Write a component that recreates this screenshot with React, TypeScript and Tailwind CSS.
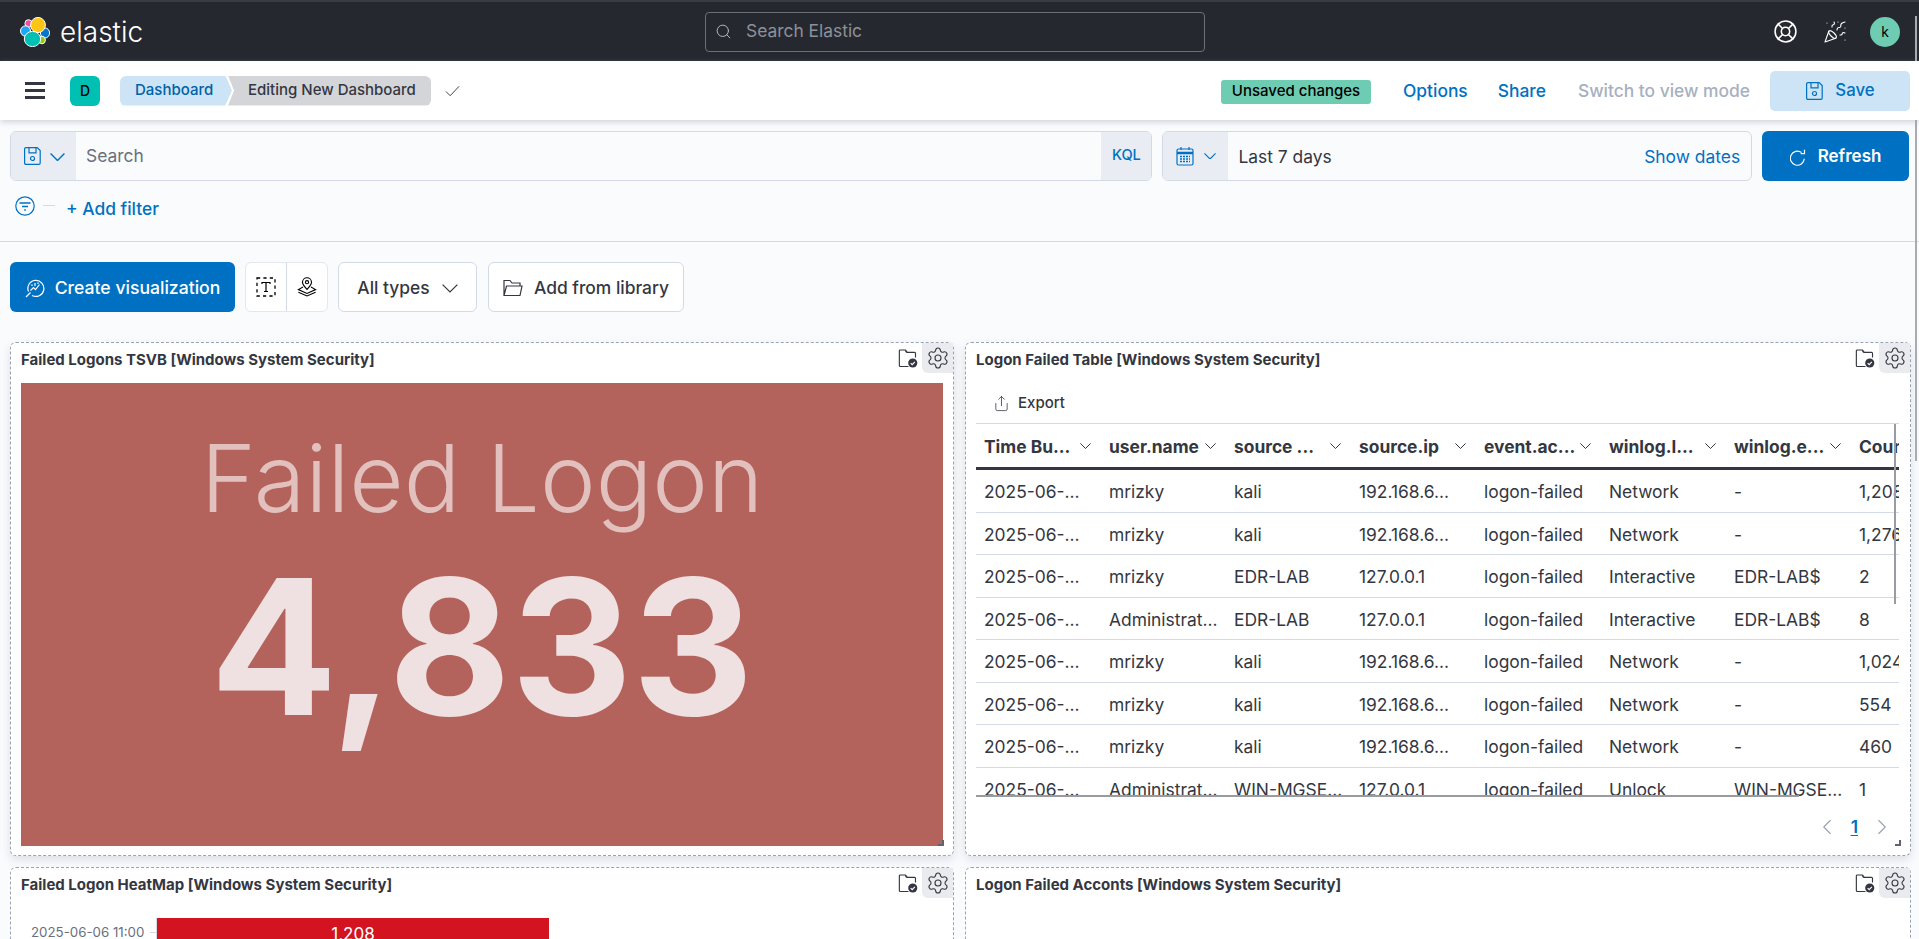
import React from "react";
import { ChevronLeft, ChevronRight, Search, LifeBuoy, PartyPopper, Settings, Share } from "lucide-react";

const Chevron = ({ w, color = "currentColor", sw = 1.2, className = "" }: { w: number; color?: string; sw?: number; className?: string }) => (
  <svg viewBox="0 0 16 9" width={w} height={(w * 9) / 16} fill="none" stroke={color} strokeWidth={(sw * 16) / w} className={className}>
    <path d="M0.6 0.6L8 8L15.4 0.6" />
  </svg>
);

const SaveIcon = ({ className = "" }: { className?: string }) => (
  <svg viewBox="0 0 20 20" width="20" height="20" fill="none" stroke="currentColor" strokeWidth="1.2" className={className}>
    <path d="M3 1.6h11.2l3 3V17a1.4 1.4 0 0 1-1.4 1.4H3A1.4 1.4 0 0 1 1.6 17V3A1.4 1.4 0 0 1 3 1.6z" />
    <path d="M6 1.8v5h7v-5" />
    <circle cx="9.5" cy="12.5" r="2" />
  </svg>
);

const FolderCheck = () => (
  <svg viewBox="0 0 21 20" width="20" height="19" fill="none" className="shrink-0">
    <path d="M11 18.4H2.4a1 1 0 0 1-1-1V2a1 1 0 0 1 1-1h5.4l2 2.6h7.6a1 1 0 0 1 1 1V9" stroke="#343741" strokeWidth="1.2" />
    <path d="M7.6 1.4l1.6 2.4" stroke="#343741" strokeWidth="1.2" />
    <circle cx="15.5" cy="14.8" r="4.8" fill="#343741" />
    <path d="M13.3 14.9l1.6 1.6 2.8-3" stroke="#fff" strokeWidth="1.2" />
  </svg>
);

const Logo = () => (
  <svg viewBox="0 0 30 30" width="30" height="30" className="shrink-0">
    <ellipse cx="8.5" cy="6.5" rx="3.6" ry="3.8" fill="#f04e98" stroke="#fff" strokeWidth="1" />
    <ellipse cx="5.5" cy="14" rx="5" ry="5.2" fill="#1ba9f5" stroke="#fff" strokeWidth="1" />
    <ellipse cx="25" cy="16" rx="4.6" ry="5" fill="#0077cc" stroke="#fff" strokeWidth="1" />
    <ellipse cx="22" cy="23" rx="3.4" ry="3.8" fill="#93c90e" stroke="#fff" strokeWidth="1" />
    <ellipse cx="18" cy="8" rx="7.4" ry="7.6" fill="#fec514" stroke="#fff" strokeWidth="1" />
    <ellipse cx="12.5" cy="22" rx="8.2" ry="7.6" fill="#00bfb3" stroke="#fff" strokeWidth="1" />
  </svg>
);

const CalendarIcon = () => (
  <svg viewBox="0 0 18 20" width="18" height="20" fill="none" stroke="#0071c2" strokeWidth="1.2">
    <rect x="1" y="3" width="16" height="16" rx="1.5" />
    <path d="M1 7h16" strokeWidth="2.4" />
    <path d="M5 1v3M13 1v3" />
    <path d="M4 10.5h10M4 13h10M4 15.5h10" strokeWidth="1.3" strokeDasharray="2 1" />
  </svg>
);

const RefreshIcon = () => (
  <svg viewBox="0 0 16 17" width="16" height="17" fill="none" stroke="#fff" strokeWidth="1.2">
    <path d="M11.5 3.6A7 7 0 1 0 14.3 9.8" />
    <path d="M14.5 0.8V4.6H10.7" />
  </svg>
);

const FilterCircle = () => (
  <svg viewBox="0 0 20 20" width="20" height="20" fill="none" stroke="#0071c2" strokeWidth="1.2">
    <circle cx="10" cy="10" r="9.2" />
    <path d="M4.5 7h11M7 10.5h6M9.2 14h1.6" strokeWidth="1.4" />
  </svg>
);

const VizIcon = () => (
  <svg viewBox="0 0 20 20" width="20" height="20" fill="none" stroke="#fff" strokeWidth="1.2">
    <path d="M3.5 13.5A8 8 0 1 1 7 17.4" />
    <path d="M1 19l4.5-4.5" />
    <path d="M5.5 12.5l3-3 2 2 4-5" />
    <path d="M7 8V6.5M10 8V5M13 6V4.5" />
  </svg>
);

const TextIcon = () => (
  <svg viewBox="0 0 20 20" width="20" height="20" fill="none" stroke="#000" strokeWidth="1.2">
    <path d="M1 1h18v18H1z" strokeDasharray="3.2 3.2" strokeWidth="1.3" />
    <path d="M6 7V5.5h8V7M10 5.5v9M8 14.5h4" />
  </svg>
);

const MapIcon = () => (
  <svg viewBox="0 0 20 20" width="20" height="20" fill="none" stroke="#000" strokeWidth="1.1">
    <path d="M10 12.5C7.5 9.5 5.5 7.6 5.5 5.2a4.5 4.5 0 0 1 9 0c0 2.4-2 4.3-4.5 7.3z" />
    <circle cx="10" cy="5.2" r="1.6" />
    <path d="M6 10l-4.6 2.6L10 16.5l8.6-3.9L14 10" />
    <path d="M1.4 15.2L10 19l8.6-3.8" />
  </svg>
);

const PanelHeader = ({ title }: { title: string }) => (
  <div className="flex h-[30px] shrink-0 items-start">
    <div className="flex-1 truncate pl-[10px] pt-[7px] text-[15px] font-bold leading-[20px] text-[#343741]">{title}</div>
    <div className="flex items-center pt-[6px]">
      <FolderCheck />
    </div>
    <div className="ml-[4px] flex h-[30px] w-[31px] items-center justify-center rounded-bl-[6px] bg-[#e9ebee]">
      <Settings size={24} strokeWidth={1.1} color="#343741" />
    </div>
  </div>
);

const columns = ["Time Bu...", "user.name", "source ...", "source.ip", "event.ac...", "winlog.l...", "winlog.e...", "Count"];
const rows = [
  ["2025-06-...", "mrizky", "kali", "192.168.6...", "logon-failed", "Network", "-", "1,208"],
  ["2025-06-...", "mrizky", "kali", "192.168.6...", "logon-failed", "Network", "-", "1,276"],
  ["2025-06-...", "mrizky", "EDR-LAB", "127.0.0.1", "logon-failed", "Interactive", "EDR-LAB$", "2"],
  ["2025-06-...", "Administrat...", "EDR-LAB", "127.0.0.1", "logon-failed", "Interactive", "EDR-LAB$", "8"],
  ["2025-06-...", "mrizky", "kali", "192.168.6...", "logon-failed", "Network", "-", "1,024"],
  ["2025-06-...", "mrizky", "kali", "192.168.6...", "logon-failed", "Network", "-", "554"],
  ["2025-06-...", "mrizky", "kali", "192.168.6...", "logon-failed", "Network", "-", "460"],
  ["2025-06-...", "Administrat...", "WIN-MGSE...", "127.0.0.1", "logon-failed", "Unlock", "WIN-MGSE...", "1"],
];

export default function App() {
  return (
    <div
      className="relative h-[939px] w-[1919px] overflow-hidden bg-[#fafbfd] text-[17.4px] text-[#343741]"
      style={{ fontFamily: "Inter, 'Noto Sans', sans-serif" }}
    >
      {/* top bar */}
      <div className="flex h-[61px] items-center border-t-2 border-[#3a3c42] bg-[#25282f] pl-[20px] pr-[19px]">
        <div className="flex w-[685px] items-center">
          <Logo />
          <span className="ml-[10px] text-[28px] font-light leading-none text-white">elastic</span>
        </div>
        <div className="flex h-[40px] w-[500px] items-center rounded-[4px] border border-[#6c6f75] pl-[9px]">
          <Search size={17} strokeWidth={1.3} color="#bfc2c8" />
          <span className="ml-[14px] text-[#8e9197]">Search Elastic</span>
        </div>
        <div className="ml-auto flex items-center">
          <LifeBuoy size={25} strokeWidth={1.5} color="#fff" />
          <PartyPopper size={24} strokeWidth={1.1} color="#fff" className="ml-[25px]" />
          <div className="ml-[23px] flex h-[30px] w-[30px] items-center justify-center rounded-full bg-[#6dccb1] text-[14px] text-black">k</div>
        </div>
      </div>

      {/* app header */}
      <div className="relative z-10 flex h-[59px] items-center bg-white pl-[25px] pr-[9px] shadow-[0_2px_6px_rgba(152,162,179,0.45)]">
        <div className="flex w-[20px] flex-col gap-[4px]">
          <div className="h-[3px] bg-[#343741]" />
          <div className="h-[3px] bg-[#343741]" />
          <div className="h-[3px] bg-[#343741]" />
        </div>
        <div className="ml-[25px] flex h-[30px] w-[30px] items-center justify-center rounded-[6px] bg-[#00bfb3] text-[14px] font-medium text-black">D</div>
        <div
          className="ml-[20px] flex h-[30px] w-[112px] items-center rounded-l-[6px] bg-[#cce4f5] pl-[15px] text-[15px] font-medium text-[#0061a6]"
          style={{ clipPath: "polygon(0 0, 94% 0, 100% 50%, 94% 100%, 0 100%)" }}
        >
          Dashboard
        </div>
        <div
          className="-ml-[4px] flex h-[30px] w-[203px] items-center rounded-r-[6px] bg-[#d3d5d9] pl-[20px] text-[15px] font-medium text-[#343741]"
          style={{ clipPath: "polygon(0 0, 100% 0, 100% 100%, 0 100%, 3% 50%)" }}
        >
          Editing New Dashboard
        </div>
        <svg viewBox="0 0 16 12" width="15" height="12" fill="none" stroke="#343741" strokeWidth="1" className="ml-[14px]">
          <path d="M1 6.5L5.5 11L15 1" />
        </svg>
        <div className="ml-auto flex items-center">
          <span className="mt-[2px] flex h-[24px] w-[150px] items-center justify-center rounded-[3px] bg-[#6dccb1] text-[15px] font-medium text-black">Unsaved changes</span>
          <span className="ml-[32px] pt-[1px] font-medium text-[#0071c2]">Options</span>
          <span className="ml-[30px] pt-[1px] font-medium text-[#0071c2]">Share</span>
          <span className="ml-[32px] pt-[1px] font-medium text-[#a7b0c0]">Switch to view mode</span>
          <div className="ml-[20px] flex h-[40px] w-[140px] items-center justify-center gap-[10px] rounded-[5px] bg-[#cce4f5] pt-[1px] text-[16.8px] font-medium text-[#0071c2]">
            <SaveIcon />
            Save
          </div>
        </div>
      </div>

      {/* query bar */}
      <div className="h-[122px] border-b border-[#d3dae6] px-[10px] pt-[11px]">
        <div className="flex gap-[10px]">
          <div className="flex h-[50px] w-[1143px] overflow-hidden rounded-[6px] border border-[#d3dae6]">
            <div className="flex w-[65px] items-center justify-center gap-[7px] bg-[#e9edf3] text-[#0071c2]">
              <SaveIcon />
              <Chevron w={15} sw={1.4} className="mt-[2px]" />
            </div>
            <div className="flex flex-1 items-center pl-[10px] pt-[1px] text-[#69707d]">Search</div>
            <div className="flex w-[50px] items-center justify-center bg-[#e9edf3] text-[14.6px] font-medium text-[#0071c2]">KQL</div>
          </div>
          <div className="flex h-[50px] w-[590px] overflow-hidden rounded-[6px] border border-[#d3dae6]">
            <div className="flex w-[65px] items-center justify-center gap-[10px] bg-[#e9edf3] text-[#0071c2]">
              <CalendarIcon />
              <Chevron w={12} sw={1.1} />
            </div>
            <div className="flex flex-1 items-center justify-between pl-[10px] pr-[11px] pt-[2px]">
              <span>Last 7 days</span>
              <span className="text-[#0071c2]">Show dates</span>
            </div>
          </div>
          <div className="flex h-[50px] w-[147px] items-center justify-center gap-[12px] rounded-[6px] bg-[#0071c2] pt-[2px] font-semibold text-white">
            <RefreshIcon />
            <span className="text-[17px]">Refresh</span>
          </div>
        </div>
        <div className="mt-[16px] flex h-[25px] items-center pl-[5px]">
          <div className="-mt-[7px]">
            <FilterCircle />
          </div>
          <div className="ml-[8px] -mt-[8px] h-px w-[12px] bg-[#d3dae6]" />
          <span className="ml-[11px] font-medium text-[#0071c2]">+ Add filter</span>
        </div>
      </div>

      {/* toolbar */}
      <div className="mt-[20px] flex h-[50px] items-center px-[10px]">
        <div className="flex h-[50px] w-[225px] items-center justify-center gap-[10px] rounded-[6px] bg-[#0071c2] pt-[2px] text-[17.6px] font-medium text-white">
          <VizIcon />
          Create visualization
        </div>
        <div className="ml-[10px] flex h-[50px] w-[83px] rounded-[6px] border border-[#e3e7ef] bg-white">
          <div className="flex w-[41px] items-center justify-center border-r border-[#d3dae6]">
            <TextIcon />
          </div>
          <div className="flex flex-1 items-center justify-center">
            <MapIcon />
          </div>
        </div>
        <div className="ml-[10px] flex h-[50px] w-[139px] items-center justify-center gap-[12px] rounded-[6px] border border-[#d3dae6] bg-white pt-[2px] font-medium">
          All types
          <Chevron w={16} sw={1.2} />
        </div>
        <div className="ml-[11px] flex h-[50px] w-[196px] items-center justify-center gap-[11px] rounded-[6px] border border-[#d3dae6] bg-white pt-[2px] font-medium">
          <svg viewBox="0 0 20 18" width="20" height="18" fill="none" stroke="#343741" strokeWidth="1.2">
            <path d="M1 16.5V1.5h6l2 2.5h8v3M1 16.5l2.5-9.5H19l-2 9.5z" />
          </svg>
          Add from library
        </div>
      </div>

      {/* panels */}
      <div className="mt-[30px] grid grid-cols-[944px_946px] gap-x-[11px] gap-y-[11px] px-[10px]">
        <div className="relative flex h-[514px] flex-col rounded-[6px] border border-dashed border-[#98a2b3] bg-white shadow-[0_4px_10px_rgba(152,162,179,0.3)]">
          <PanelHeader title="Failed Logons TSVB [Windows System Security]" />
          <div className="mx-[10px] mt-[10px] flex h-[463px] flex-col items-center bg-[#b4635c]">
            <div className="mt-[38px] text-[94px] font-light leading-[114px] text-[#e1c0bd]">Failed Logon</div>
            <div className="-mt-[2px] text-[188px] font-bold leading-[228px] text-[#efe1e1]">4,833</div>
          </div>
          <div className="absolute bottom-[9px] right-[9px] h-[6px] w-[6px] border-b-2 border-r-2 border-[#5f646e]" />
        </div>

        <div className="relative flex h-[514px] flex-col rounded-[6px] border border-dashed border-[#98a2b3] bg-white shadow-[0_4px_10px_rgba(152,162,179,0.3)]">
          <PanelHeader title="Logon Failed Table [Windows System Security]" />
          <div className="flex h-[50px] items-center gap-[8px] pl-[27px] pt-[10px] text-[15px] font-medium text-[#343741]">
            <Share size={17} strokeWidth={1.1} />
            <span>Export</span>
          </div>
          <div className="relative ml-[10px] h-[374px] w-[923px] overflow-hidden border-t border-[#d3dae6]">
            <div className="flex h-[46px] border-b-[3px] border-[#343741]">
              {columns.map((c, i) => (
                <div key={i} className="relative flex w-[125px] shrink-0 items-center pl-[8px] pt-[3px] font-bold">
                  <span className="whitespace-nowrap">{c}</span>
                  {i < 7 && <Chevron w={11} sw={1} className="absolute right-[10px] top-[19px]" />}
                </div>
              ))}
            </div>
            {rows.map((r, i) => (
              <div key={i} className="flex h-[42.5px] border-b border-[#d3dae6]">
                {r.map((c, j) => (
                  <div key={j} className="flex w-[125px] shrink-0 items-center whitespace-nowrap pl-[8px] pt-[3px] text-[#343741]">{c}</div>
                ))}
              </div>
            ))}
            <div className="absolute bottom-0 left-0 h-[2px] w-[823px] bg-[#9a9b9e]" />
            <div className="absolute right-[3px] top-0 h-[180px] w-[2px] bg-[#9a9ca1]" />
          </div>
          <div className="flex flex-1 items-center justify-end pr-[15px] pt-[2px]">
            <ChevronLeft size={26} strokeWidth={1} color="#98a2b3" />
            <span className="mx-[11px] font-semibold text-[#0071c2] underline underline-offset-2">1</span>
            <ChevronRight size={26} strokeWidth={1} color="#98a2b3" />
          </div>
          <div className="absolute bottom-[9px] right-[9px] h-[6px] w-[6px] border-b-2 border-r-2 border-[#5f646e]" />
        </div>

        <div className="flex h-[300px] flex-col rounded-[6px] border border-dashed border-[#98a2b3] bg-white">
          <PanelHeader title="Failed Logon HeatMap [Windows System Security]" />
          <div className="mt-[20px] flex h-[30px] items-start pl-[20px]">
            <span className="mt-[6px] w-[114px] whitespace-nowrap text-[13.3px] leading-[16px] text-[#69707d]">2025-06-06 11:00</span>
            <div className="mt-[14px] ml-[5px] h-px w-[6px] bg-[#d3dae6]" />
            <div className="flex h-[30px] w-[393px] items-center justify-center border-l border-[#d3dae6] bg-[#d31320] pt-[4px] text-[17px] text-white">1,208</div>
          </div>
        </div>

        <div className="flex h-[300px] flex-col rounded-[6px] border border-dashed border-[#98a2b3] bg-white">
          <PanelHeader title="Logon Failed Acconts [Windows System Security]" />
        </div>
      </div>

      <div className="absolute right-[2px] top-[16px] h-[445px] w-[2px] bg-[#a9abb0]" />
    </div>
  );
}
